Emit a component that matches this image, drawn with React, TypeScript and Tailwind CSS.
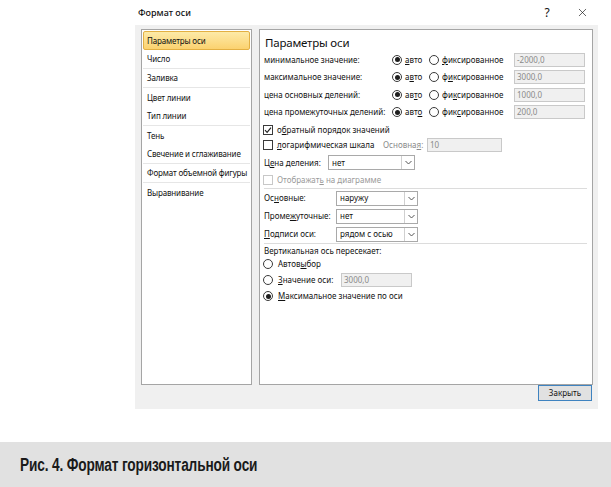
import { X } from "lucide-react";

const Radio = ({ checked }: { checked?: boolean }) => (
  <span className="w-[10px] h-[10px] rounded-full border border-[#3a3a3a] bg-white flex items-center justify-center shrink-0">
    {checked && <span className="w-[5px] h-[5px] rounded-full bg-[#1e1e1e]" />}
  </span>
);

const Check = ({ checked, disabled }: { checked?: boolean; disabled?: boolean }) => (
  <span
    className={`w-[10px] h-[10px] border bg-white flex items-center justify-center shrink-0 ${
      disabled ? "border-[#c8c8c8]" : "border-[#3a3a3a]"
    }`}
  >
    {checked && (
      <svg width="8" height="8" viewBox="0 0 8 8">
        <path d="M1 4.2 L3.1 6.3 L7 1.6" fill="none" stroke="#222" strokeWidth="1.2" />
      </svg>
    )}
  </span>
);

const Field = ({ value, w }: { value: string; w: string }) => (
  <span
    className={`${w} h-[14px] border border-[#c9c9c9] bg-[#f0f0f0] text-[#8a8a8a] pl-[2px] flex items-center shrink-0`}
  >
    {value}
  </span>
);

const Select = ({ value, w }: { value: string; w: string }) => (
  <span className={`${w} h-[15px] border border-[#a9a9a9] bg-white flex items-center shrink-0`}>
    <span className="flex-1 pl-[3px]">{value}</span>
    <span className="w-[13px] h-full border-l border-[#d0d0d0] flex items-center justify-center">
      <svg width="7" height="5" viewBox="0 0 7 5">
        <path d="M0.5 1 L3.5 4 L6.5 1" fill="none" stroke="#555" strokeWidth="1" />
      </svg>
    </span>
  </span>
);

const U = ({ children }: { children: string }) => <span className="underline underline-offset-1">{children}</span>;

const navItems = [
  { label: "Параметры оси", sep: false },
  { label: "Число", sep: true },
  { label: "Заливка", sep: true },
  { label: "Цвет линии", sep: false },
  { label: "Тип линии", sep: true },
  { label: "Тень", sep: false },
  { label: "Свечение и сглаживание", sep: true },
  { label: "Формат объемной фигуры", sep: true },
  { label: "Выравнивание", sep: false },
];

const autoRows = [
  { label: "минимальное значение:", a: ["", "а", "вто"], f: ["", "ф", "иксированное"], v: "-2000,0" },
  { label: "максимальное значение:", a: ["а", "в", "то"], f: ["ф", "и", "ксированное"], v: "3000,0" },
  { label: "цена основных делений:", a: ["ав", "т", "о"], f: ["фи", "к", "сированное"], v: "1000,0" },
  { label: "цена промежуточных делений:", a: ["авт", "о", ""], f: ["фик", "с", "ированное"], v: "200,0" },
];

const App = () => {
  return (
    <div className="w-[611px] h-[487px] bg-white overflow-hidden font-['Noto_Sans',sans-serif] text-[#111] text-[8px] leading-none whitespace-nowrap">
      <div className="ml-[135px] w-[463px]">
        {/* title bar */}
        <div className="h-[25px] flex items-center">
          <span className="pl-[3px] text-[9px] font-medium">Формат оси</span>
          <span className="ml-auto w-[20px] text-center text-[12px]">?</span>
          <span className="ml-[15px] w-[20px] flex justify-center">
            <X size={13} strokeWidth={1.2} />
          </span>
          <span className="w-[6px]" />
        </div>

        <div className="bg-[#f0f0f0] h-[384px] flex flex-col">
          <div className="pt-[4px] pl-[6px] pr-[5px] flex gap-[7px] h-[360px]">
            {/* left list */}
            <div className="w-[111px] h-[356px] border border-[#a5a5a5] bg-white pt-[1px] px-[1px] tracking-[-0.15px]">
              {navItems.map((it, i) =>
                i === 0 ? (
                  <div
                    key={it.label}
                    className="h-[19px] flex items-center pl-[3px] rounded-[2px] border border-[#e3b043] bg-gradient-to-b from-[#fdeaa7] to-[#fbd26f]"
                  >
                    {it.label}
                  </div>
                ) : (
                  <div
                    key={it.label}
                    className={`h-[19px] flex items-center pl-[4px] ${it.sep ? "border-b border-[#e6e6e6]" : ""}`}
                  >
                    {it.label}
                  </div>
                )
              )}
            </div>

            {/* right panel */}
            <div className="w-[334px] h-[356px] border border-[#a5a5a5] bg-white pl-[4px] pr-[4px]">
              <div className="mt-[5px] h-[16px] flex items-center text-[11.5px] pl-[1px] tracking-[-0.2px]">
                Параметры оси
              </div>

              {autoRows.map((r) => (
                <div key={r.label} className="h-[17.5px] flex items-center">
                  <span className="w-[128px]">{r.label}</span>
                  <Radio checked />
                  <span className="w-[27px] pl-[3px]">
                    {r.a[0]}
                    {r.a[1] && <U>{r.a[1]}</U>}
                    {r.a[2]}
                  </span>
                  <Radio />
                  <span className="w-[75px] pl-[3px]">
                    {r.f[0]}
                    <U>{r.f[1]}</U>
                    {r.f[2]}
                  </span>
                  <Field value={r.v} w="w-[71px]" />
                </div>
              ))}

              <div className="h-[15px] mt-[1px] flex items-center -ml-[1px]">
                <Check checked />
                <span className="pl-[4px]">
                  о<U>б</U>ратный порядок значений
                </span>
              </div>
              <div className="h-[16px] flex items-center -ml-[1px]">
                <span className="w-[120px] flex items-center">
                  <Check />
                  <span className="pl-[4px]">
                    <U>л</U>огарифмическая шкала
                  </span>
                </span>
                <span className="w-[44px] text-[#8a8a8a]">
                  Основна<U>я</U>:
                </span>
                <Field value="10" w="w-[75px]" />
              </div>
              <div className="h-[19px] flex items-center">
                <span className="w-[64px]">
                  Ц<U>е</U>на деления:
                </span>
                <Select value="нет" w="w-[87px]" />
              </div>
              <div className="h-[16px] flex items-center -ml-[1px] text-[#9a9a9a]">
                <Check disabled />
                <span className="pl-[4px]">
                  Отображат<U>ь</U> на диаграмме
                </span>
              </div>

              <div className="h-px bg-[#dcdcdc] mr-[1px]" />

              {[
                { l: ["Ос", "н", "овные:"], v: "наружу" },
                { l: ["Проме", "ж", "уточные:"], v: "нет" },
                { l: ["", "П", "одписи оси:"], v: "рядом с осью" },
              ].map((s) => (
                <div key={s.v} className="h-[18px] flex items-center">
                  <span className="w-[72px]">
                    {s.l[0]}
                    <U>{s.l[1]}</U>
                    {s.l[2]}
                  </span>
                  <Select value={s.v} w="w-[82px]" />
                </div>
              ))}

              <div className="h-px bg-[#dcdcdc] mr-[1px]" />

              <div className="h-[12px] flex items-center pt-[1px]">Вертикальная ось пересекает:</div>
              <div className="h-[16px] flex items-center -ml-[1px]">
                <Radio />
                <span className="pl-[5px]">
                  Автов<U>ы</U>бор
                </span>
              </div>
              <div className="h-[16px] flex items-center -ml-[1px]">
                <span className="w-[78px] flex items-center">
                  <Radio />
                  <span className="pl-[5px]">
                    <U>З</U>начение оси:
                  </span>
                </span>
                <Field value="3000,0" w="w-[71px]" />
              </div>
              <div className="h-[16px] flex items-center -ml-[1px]">
                <Radio checked />
                <span className="pl-[5px]">
                  <U>М</U>аксимальное значение по оси
                </span>
              </div>
            </div>
          </div>

          <div className="flex justify-end pr-[6px]">
            <button className="w-[54px] h-[16px] border border-[#3f83c0] bg-[#e1e1e1] text-[8px] flex items-center justify-center">
              Закрыть
            </button>
          </div>
        </div>
      </div>

      <div className="mt-[33px] h-[45px] bg-[#e1e1e1] flex items-center pl-[20px]">
        <span className="inline-block origin-left scale-x-[0.76] font-['Liberation_Sans',sans-serif] font-bold text-[18px] tracking-[-0.2px] text-[#1a1a1a]">
          Рис. 4. Формат горизонтальной оси
        </span>
      </div>
    </div>
  );
};

export default App;
